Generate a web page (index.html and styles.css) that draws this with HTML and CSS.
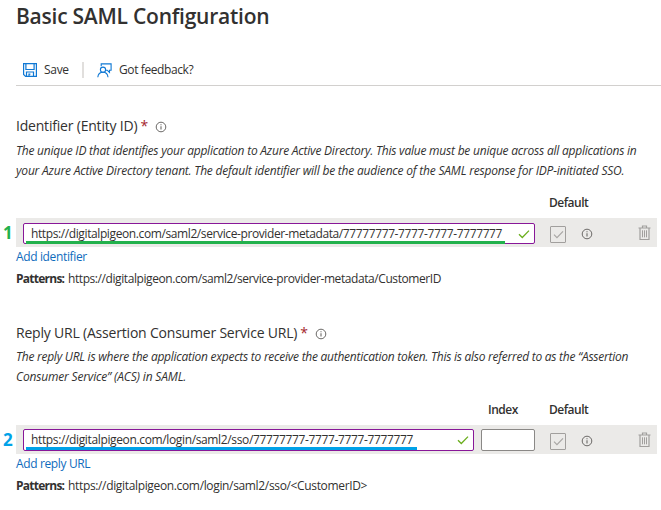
FILE: index.html
```
<!DOCTYPE html>
<html lang="en">
<head>
<meta charset="utf-8">
<title>Basic SAML Configuration</title>
<link rel="stylesheet" href="styles.css">
</head>
<body>
<svg class="defs" aria-hidden="true">
  <symbol id="info" viewBox="0 0 12 12"><circle cx="6" cy="6" r="4.8" fill="none" stroke="currentColor"/><path d="M6 5.2v3.4M6 3.2v1.1" stroke="currentColor" stroke-width="1.1"/></symbol>
  <symbol id="check" viewBox="0 0 12 10"><path d="M1 5.2l3.3 3.3L11 1.6" fill="none" stroke="currentColor" stroke-width="1.3"/></symbol>
  <symbol id="trash" viewBox="0 0 13 16"><path d="M.5 3h12M4.5 3V1h4v2M2 3.2v11.3h9V3.2" fill="none" stroke="currentColor" stroke-width="1.2"/><path d="M4.5 5.3v7M6.5 5.3v7M8.5 5.3v7" stroke="currentColor"/></symbol>
</svg>
<main class="page">
  <h1 class="title">Basic SAML Configuration</h1>
  <div class="toolbar">
    <svg class="save-icon" viewBox="0 0 14 14"><path d="M.6.6h12.8v12.8H2.6l-2-2zM2.9.6v5.9h8.2V.6M3.5 13.4V9h7v4.4M6 13.4v-2.2h1.4" fill="none" stroke="currentColor" stroke-width="1.2"/></svg>
    <span class="save">Save</span>
    <span class="divider"></span>
    <svg class="feedback-icon" viewBox="0 0 15 15"><path d="M4.2 3.2V.9h9.9v6.3h-1.6v2.3l-2.3-2.3H9" fill="none" stroke="currentColor" stroke-width="1.1"/><circle cx="6" cy="6.7" r="2.6" fill="none" stroke="currentColor" stroke-width="1.1"/><path d="M.8 14.3c.3-3 2.3-5 5.2-5s4.7 2 5 5" fill="none" stroke="currentColor" stroke-width="1.1"/></svg>
    <span class="feedback">Got feedback?</span>
  </div>

  <section class="section identifier">
    <h2 class="label">Identifier (Entity ID)<span class="required">*</span><svg class="info"><use href="#info"/></svg></h2>
    <p class="description"><span class="line-a">The unique ID that identifies your application to Azure Active Directory. This value must be unique across all applications in</span><br><span class="line-b">your Azure Active Directory tenant. The default identifier will be the audience of the SAML response for IDP-initiated SSO.</span></p>
    <div class="headers"><span class="head-default">Default</span></div>
    <div class="row">
      <span class="marker green">1</span>
      <div class="field wide"><span class="value url-a">https://digitalpigeon.com/saml2/service-provider-metadata/77777777-7777-7777-7777777</span><svg class="valid"><use href="#check"/></svg><i class="underline green-line"></i></div>
      <span class="checkbox"><svg class="tick"><use href="#check"/></svg></span>
      <svg class="info row-info"><use href="#info"/></svg>
      <svg class="trash"><use href="#trash"/></svg>
    </div>
    <a class="add">Add identifier</a>
    <p class="patterns"><b>Patterns:</b><span class="pattern-a">https://digitalpigeon.com/saml2/service-provider-metadata/CustomerID</span></p>
  </section>

  <section class="section reply">
    <h2 class="label">Reply URL (Assertion Consumer Service URL)<span class="required">*</span><svg class="info"><use href="#info"/></svg></h2>
    <p class="description"><span class="line-c">The reply URL is where the application expects to receive the authentication token. This is also referred to as the “Assertion</span><br><span class="line-d">Consumer Service” (ACS) in SAML.</span></p>
    <div class="headers"><span class="head-index">Index</span><span class="head-default">Default</span></div>
    <div class="row">
      <span class="marker blue">2</span>
      <div class="field"><span class="value url-b">https://digitalpigeon.com/login/saml2/sso/77777777-7777-7777-7777777</span><svg class="valid"><use href="#check"/></svg><i class="underline blue-line"></i></div>
      <div class="index"></div>
      <span class="checkbox"><svg class="tick"><use href="#check"/></svg></span>
      <svg class="info row-info"><use href="#info"/></svg>
      <svg class="trash"><use href="#trash"/></svg>
    </div>
    <a class="add">Add reply URL</a>
    <p class="patterns"><b>Patterns:</b><span class="pattern-b">https://digitalpigeon.com/login/saml2/sso/&lt;CustomerID&gt;</span></p>
  </section>
</main>
</body>
</html>
```
FILE: styles.css
```
* { box-sizing: border-box; }
body { margin: 0; background: #fff; color: #323130; font: 12px/20px "Open Sans", "Noto Sans", sans-serif; overflow: hidden; }
h1, h2, p { margin: 0; }
svg { flex: none; display: block; }
.defs { display: none; }
.page { width: 661px; height: 510px; padding-left: 16px; }
.title { height: 31px; font-size: 21px; line-height: 32px; font-weight: 600; letter-spacing: -.24px; white-space: nowrap; }
.toolbar { display: flex; align-items: center; height: 55px; padding: 24px 0 0 7px; border-bottom: 1px solid #d2d0ce; }
.save-icon { width: 14px; height: 14px; margin-right: 7px; color: #0f78d4; }
.save { width: 38px; letter-spacing: -.3px; }
.divider { width: 2px; height: 16px; background: #e1dfdd; }
.feedback-icon { width: 15px; height: 15px; margin: 0 7px 0 13px; color: #0f78d4; }
.feedback { letter-spacing: -.4px; }
.section { white-space: nowrap; }
.identifier { padding-top: 29px; }
.reply { padding-top: 34px; }
.label { display: flex; align-items: center; height: 22px; padding-bottom: 1px; font-size: 14px; font-weight: 400; letter-spacing: -.2px; }
.required { margin: 0 8px 0 3px; width: 7px; color: #a4262c; }
.info { width: 12px; height: 12px; color: #6b6967; }
.label .info { margin-top: 2px; }
.description { margin-top: 4px; font-style: italic; }
.reply .description { margin-top: 3px; }
.line-a { letter-spacing: -.22px; }
.line-b { letter-spacing: -.2px; }
.line-c { letter-spacing: -.255px; }
.line-d { letter-spacing: -.17px; }
.headers { display: flex; justify-content: flex-end; height: 37px; padding: 12px 69px 0 0; font-weight: 600; letter-spacing: -.48px; }
.reply .headers { height: 38px; padding-top: 13px; }
.head-default { width: 43px; }
.head-index { width: 61px; }
.row { position: relative; display: flex; align-items: center; width: 641px; height: 29px; padding-left: 7px; background: #ebeae8; }
.marker { position: absolute; left: -13px; top: 4px; font: 700 17px/22px "Open Sans", sans-serif; }
.green { color: #22b14c; }
.blue { color: #00a2e8; }
.field { position: relative; display: flex; align-items: center; justify-content: space-between; width: 451px; height: 22px; padding: 0 4px 0 7px; border: 1px solid #881798; border-radius: 2px; background: #fff; }
.wide { width: 512px; height: 21px; margin-top: 1px; padding-top: 1px; }
.url-a { letter-spacing: -.393px; }
.url-b { letter-spacing: -.36px; }
.valid { width: 12px; height: 10px; color: #6aae1c; }
.underline { position: absolute; left: 2px; height: 3px; }
.green-line { width: 479px; bottom: -1px; background: #22b14c; }
.blue-line { width: 391px; bottom: 0; background: #00a2e8; }
.index { width: 54px; height: 22px; margin-left: 7px; border: 1px solid #8a8886; border-radius: 2px; background: #fff; }
.checkbox { display: flex; align-items: center; justify-content: center; width: 16px; height: 17px; margin: 4px 0 0 15px; border: 1px solid #a19f9d; border-radius: 1px; }
.tick { width: 11px; height: 9px; color: #a8a6a4; }
.row-info { margin: 3px 0 0 15px; }
.trash { width: 13px; height: 16px; margin-left: 45px; margin-top: 1px; color: #a19f9d; }
.add { display: block; height: 20px; color: #0f6cbd; letter-spacing: -.36px; }
.patterns { height: 21px; padding-top: 2px; }
.patterns b { display: inline-block; width: 52px; letter-spacing: -.75px; }
.pattern-a { letter-spacing: -.42px; }
.pattern-b { letter-spacing: -.345px; }
```
